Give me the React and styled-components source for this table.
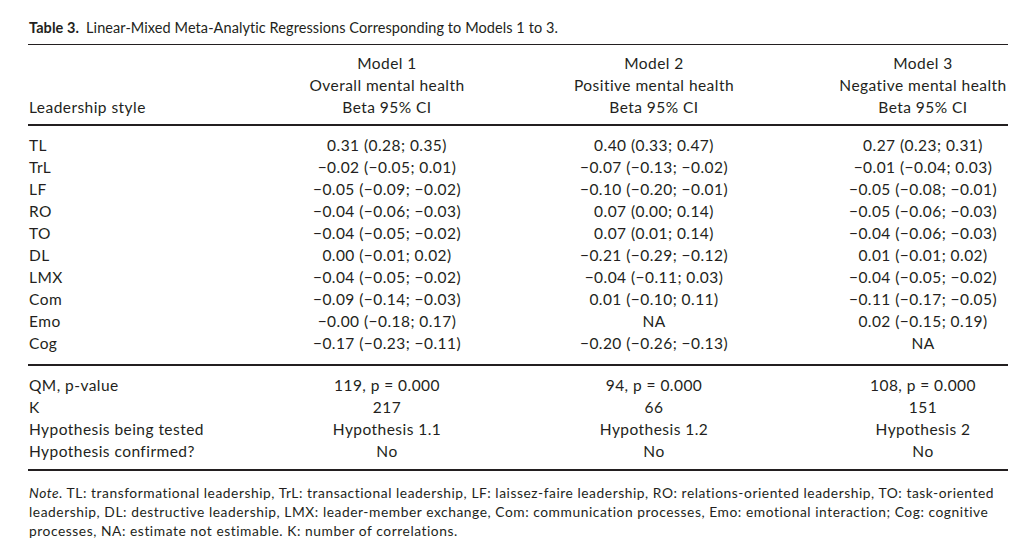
import React from 'react';
import styled, { createGlobalStyle } from 'styled-components';

const GlobalStyle = createGlobalStyle`
  html, body {
    margin: 0;
    padding: 0;
    background: #fff;
  }
  body {
    font-family: Lato, "Open Sans", sans-serif;
    color: #231f20;
  }
`;

const COLS = '276px 166px 368px 170px';

const models = [
  { name: 'Model 1', label: 'Overall mental health' },
  { name: 'Model 2', label: 'Positive mental health' },
  { name: 'Model 3', label: 'Negative mental health' },
];

const rows = [
  ['TL', '0.31 (0.28; 0.35)', '0.40 (0.33; 0.47)', '0.27 (0.23; 0.31)'],
  ['TrL', '−0.02 (−0.05; 0.01)', '−0.07 (−0.13; −0.02)', '−0.01 (−0.04; 0.03)'],
  ['LF', '−0.05 (−0.09; −0.02)', '−0.10 (−0.20; −0.01)', '−0.05 (−0.08; −0.01)'],
  ['RO', '−0.04 (−0.06; −0.03)', '0.07 (0.00; 0.14)', '−0.05 (−0.06; −0.03)'],
  ['TO', '−0.04 (−0.05; −0.02)', '0.07 (0.01; 0.14)', '−0.04 (−0.06; −0.03)'],
  ['DL', '0.00 (−0.01; 0.02)', '−0.21 (−0.29; −0.12)', '0.01 (−0.01; 0.02)'],
  ['LMX', '−0.04 (−0.05; −0.02)', '−0.04 (−0.11; 0.03)', '−0.04 (−0.05; −0.02)'],
  ['Com', '−0.09 (−0.14; −0.03)', '0.01 (−0.10; 0.11)', '−0.11 (−0.17; −0.05)'],
  ['Emo', '−0.00 (−0.18; 0.17)', 'NA', '0.02 (−0.15; 0.19)'],
  ['Cog', '−0.17 (−0.23; −0.11)', '−0.20 (−0.26; −0.13)', 'NA'],
];

const summary = [
  ['QM, p-value', '119, p = 0.000', '94, p = 0.000', '108, p = 0.000'],
  ['K', '217', '66', '151'],
  ['Hypothesis being tested', 'Hypothesis 1.1', 'Hypothesis 1.2', 'Hypothesis 2'],
  ['Hypothesis confirmed?', 'No', 'No', 'No'],
];

function App() {
  return (
    <>
      <GlobalStyle />
      <Page>
        <Caption>
          <CaptionLabel>Table 3.</CaptionLabel>
          Linear-Mixed Meta-Analytic Regressions Corresponding to Models 1 to 3.
        </Caption>
        <Head>
          <Cell>
            <br />
            <br />
            Leadership style
          </Cell>
          {models.map((m) => (
            <Cell key={m.name} $center>
              {m.name}
              <br />
              {m.label}
              <br />
              Beta 95% CI
            </Cell>
          ))}
        </Head>
        <Body>
          {rows.map((r) =>
            r.map((v, i) => (
              <Cell key={r[0] + i} $center={i > 0}>
                {v}
              </Cell>
            ))
          )}
        </Body>
        <Foot>
          {summary.map((r) =>
            r.map((v, i) => (
              <Cell key={r[0] + i} $center={i > 0}>
                {v}
              </Cell>
            ))
          )}
        </Foot>
        <Note>
          <NoteLabel>Note.</NoteLabel> TL: transformational leadership, TrL: transactional leadership, LF:
          laissez-faire leadership, RO: relations-oriented leadership, TO: task-oriented
          <br />
          leadership, DL: destructive leadership, LMX: leader-member exchange, Com: communication
          processes, Emo: emotional interaction; Cog: cognitive
          <br />
          processes, NA: estimate not estimable. K: number of correlations.
        </Note>
      </Page>
    </>
  );
}

export default App;

const Page = styled.div`
  width: 980px;
  padding: 17px 0 0 28px;
`;

const Caption = styled.div`
  font-size: 14.5px;
  letter-spacing: 0.08px;
  line-height: 22px;
  padding-left: 1px;
  padding-bottom: 5px;
  border-bottom: 1px solid #231f20;
  white-space: nowrap;
`;

const CaptionLabel = styled.span`
  font-weight: 700;
  margin-right: 7px;
`;

const Grid = styled.div`
  display: grid;
  grid-template-columns: ${COLS};
  font-size: 15.5px;
  letter-spacing: 0.45px;
  line-height: 22px;
`;

const Head = styled(Grid)`
  padding: 7px 0 6px;
  border-bottom: 2px solid #231f20;
`;

const Body = styled(Grid)`
  padding: 8px 0 10px;
  border-bottom: 2px solid #231f20;
`;

const Foot = styled(Grid)`
  padding: 8px 0 7px;
  border-bottom: 2px solid #231f20;
`;

const Cell = styled.div`
  text-align: ${(p) => (p.$center ? 'center' : 'left')};
  padding-left: ${(p) => (p.$center ? '0' : '1px')};
  white-space: nowrap;
`;

const Note = styled.p`
  margin: 12px 0 0;
  padding-left: 1px;
  font-size: 13.8px;
  letter-spacing: 0.55px;
  line-height: 19px;
  white-space: nowrap;
`;

const NoteLabel = styled.em`
  font-style: italic;
`;
